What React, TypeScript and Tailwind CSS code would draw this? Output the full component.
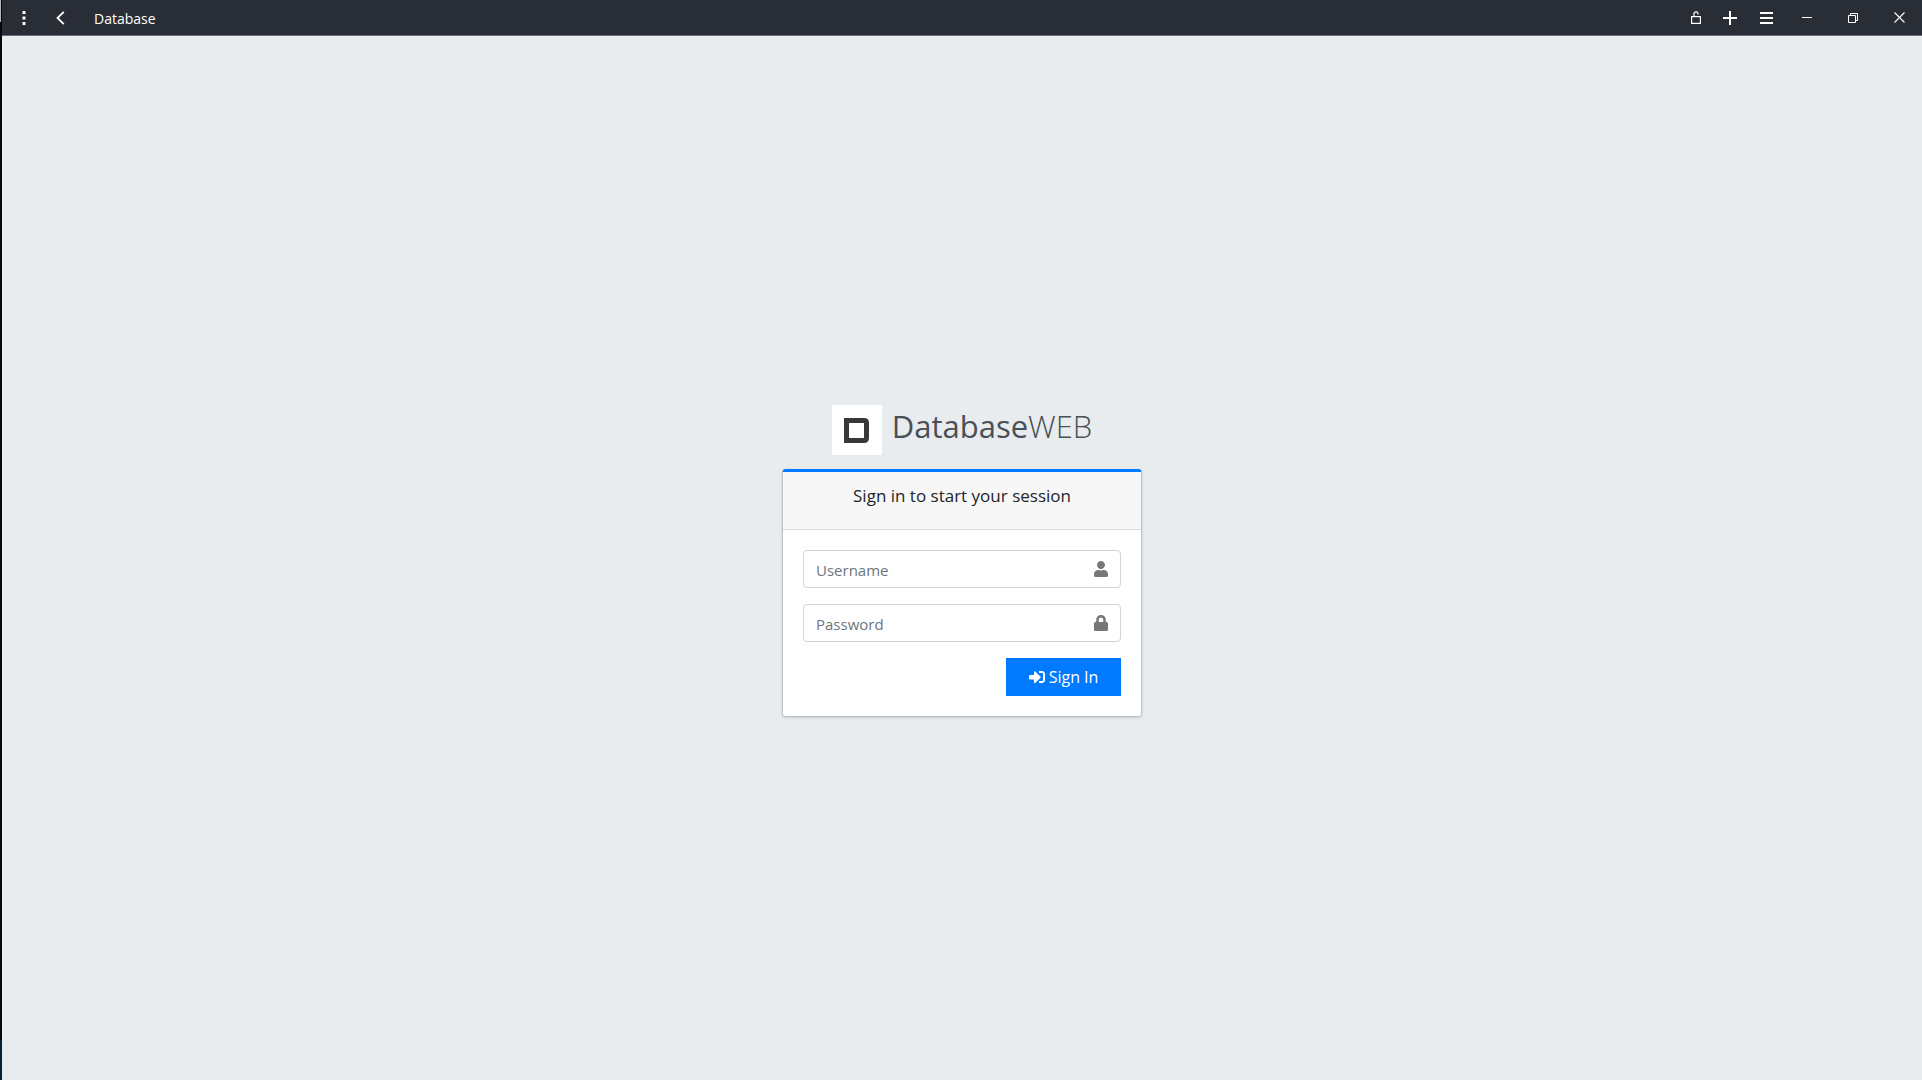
import { FaLock, FaSignInAlt, FaUser } from 'react-icons/fa';
import type { ReactNode } from 'react';

function BarButton({ label, className, children }: { label: string; className: string; children: ReactNode }) {
  return (
    <button type="button" aria-label={label} className={`flex h-full items-center justify-center ${className}`}>
      {children}
    </button>
  );
}

function TitleBar() {
  return (
    <header className="flex h-9 shrink-0 items-center justify-between border-b border-[#6c6f73] bg-[#292d36] text-white">
      <div className="flex h-full items-center">
        <BarButton label="More" className="w-11">
          <svg width="4" height="15" viewBox="0 0 4 15" fill="currentColor">
            <rect x="0.5" y="1" width="3" height="3" rx="0.6" />
            <rect x="0.5" y="6.5" width="3" height="3" rx="0.6" />
            <rect x="0.5" y="12" width="3" height="3" rx="0.6" />
          </svg>
        </BarButton>
        <BarButton label="Back" className="w-7">
          <svg width="9" height="14" viewBox="0 0 9 14" fill="none" stroke="currentColor" strokeWidth="1.8">
            <path d="M7.8 0.8 1.5 7l6.3 6.2" />
          </svg>
        </BarButton>
        <h1 className="ml-5 pt-0.5 text-sm">Database</h1>
      </div>
      <div className="flex h-full items-center">
        <BarButton label="Unlock" className="w-8">
          <svg width="10" height="13" viewBox="0 0 10 13" fill="none" stroke="currentColor" strokeWidth="1.2">
            <rect x="0.6" y="5.6" width="8.8" height="6.8" />
            <path d="M3 5.6V3a2 2 0 0 1 4-.4v1" />
          </svg>
        </BarButton>
        <BarButton label="Add" className="w-9">
          <svg width="14" height="14" viewBox="0 0 14 14" fill="none" stroke="currentColor" strokeWidth="2">
            <path d="M7 0v14M0 7h14" />
          </svg>
        </BarButton>
        <BarButton label="Menu" className="w-9">
          <svg width="13" height="12" viewBox="0 0 13 12" fill="currentColor">
            <path d="M0 0h13v2H0zM0 5h13v2H0zM0 10h13v2H0z" />
          </svg>
        </BarButton>
        <BarButton label="Minimize" className="w-[46px]">
          <svg width="10" height="1" viewBox="0 0 10 1" fill="currentColor">
            <path d="M0 0h10v1H0z" />
          </svg>
        </BarButton>
        <BarButton label="Restore" className="w-[46px]">
          <svg width="10" height="10" viewBox="0 0 10 10" fill="none" stroke="currentColor">
            <path d="M.5 2.5h7v7h-7zM2.5 2.5v-2h7v7h-2" />
          </svg>
        </BarButton>
        <BarButton label="Close" className="w-[46px]">
          <svg width="11" height="11" viewBox="0 0 11 11" fill="none" stroke="currentColor" strokeWidth="1.1">
            <path d="m.5.5 10 10M10.500.5l-10 10" />
          </svg>
        </BarButton>
      </div>
    </header>
  );
}

function Field({ id, label, type, icon }: { id: string; label: string; type: string; icon: ReactNode }) {
  return (
    <label
      htmlFor={id}
      className="mb-4 flex h-[38px] items-center rounded border border-[#ced4da] bg-white pr-[11px] pl-3 text-[#777777]"
    >
      <input
        id={id}
        type={type}
        placeholder={label}
        aria-label={label}
        className="min-w-0 flex-1 bg-transparent pt-0.5 text-[15px] text-[#495057] outline-none placeholder:text-[#6c757d]"
      />
      {icon}
    </label>
  );
}

export default function App() {
  return (
    <div className="flex min-h-screen bg-[#e8ecef] font-['Open_Sans',sans-serif]">
      <div className="flex w-0.5 flex-col bg-[#05070c]">
        <div className="h-[22px] w-px bg-[#b4b6b9]" />
        <div className="mt-auto h-10 bg-[#0c1d3b]" />
      </div>
      <div className="flex flex-1 flex-col">
        <TitleBar />
        <main className="flex flex-1 flex-col items-center justify-center pt-1.5">
          <div className="w-[360px]">
            <a href="#" className="mb-3.5 flex h-[50px] items-center justify-center gap-2.5 text-[#495057]">
              <svg width="50" height="50" viewBox="0 0 50 50">
                <path fill="#fff" d="M0 0h50v50H0z" />
                <path
                  fill="#383838"
                  fillRule="evenodd"
                  d="M12 13h20q5 0 5 5v15q0 5-5 5H12zM17 18v15h15V18z"
                />
              </svg>
              <span className="pb-2 text-[31px] leading-[42px]">
                Database<span className="font-light">WEB</span>
              </span>
            </a>
            <section className="rounded border border-t-[3px] border-black/10 border-t-[#007bff] bg-white bg-clip-padding shadow-[0_1px_3px_rgba(0,0,0,0.12)]">
              <div className="h-[58px] border-b border-[#d9d9d9] bg-[#f7f7f7] pt-3 text-center">
                <p className="text-[17px] leading-6 text-[#212529]">Sign in to start your session</p>
              </div>
              <form className="p-5" onSubmit={(event) => event.preventDefault()}>
                <Field id="username" label="Username" type="text" icon={<FaUser size={16} />} />
                <Field id="password" label="Password" type="password" icon={<FaLock size={16} />} />
                <button
                  type="submit"
                  className="ml-auto flex h-[38px] w-[115px] items-center justify-center gap-1 bg-[#007bff] text-base text-white"
                >
                  <FaSignInAlt size={16} />
                  Sign In
                </button>
              </form>
            </section>
          </div>
        </main>
      </div>
    </div>
  );
}
